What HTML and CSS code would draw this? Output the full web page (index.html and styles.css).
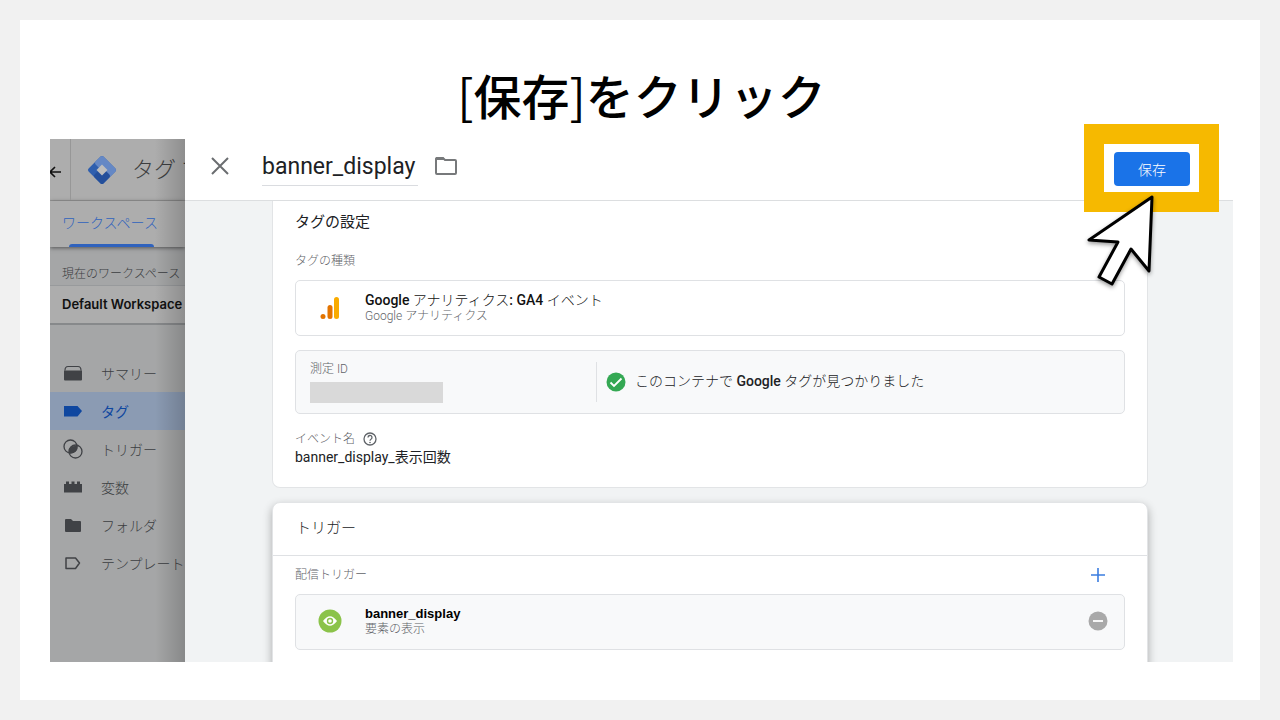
FILE: index.html
```
<!DOCTYPE html>
<html lang="ja">
<head>
    <meta charset="UTF-8">
    <meta name="viewport" content="width=device-width, initial-scale=1.0">
    <title>[保存]をクリック</title>
    <link rel="stylesheet" href="styles.css">
</head>
<body>

<main class="slide">
    <h1><span class="bracket">[</span>保存<span class="bracket">]</span>をクリック</h1>

    <div class="app">
        <aside class="sidebar">
            <div class="brand">
                <button class="back" aria-label="戻る">
                    <svg width="14" height="14" viewBox="0 0 14 14"><path d="M13 7H2M7 2L2 7l5 5" fill="none" stroke="#111" stroke-width="1.6"/></svg>
                </button>
                <svg class="logo" width="30" height="30" viewBox="0 0 30 30">
                    <path d="M15 3L27 15 15 27 3 15z" fill="#2f5fae" stroke="#2f5fae" stroke-width="4" stroke-linejoin="round"/>
                    <path d="M15 3L27 15l-5 5-12-12z" fill="#6588c5" stroke="#6588c5" stroke-width="4" stroke-linejoin="round"/>
                    <path d="M9 21l6-6 6 6-6 6z" fill="#244f9b" stroke="#244f9b" stroke-width="4" stroke-linejoin="round"/>
                    <path d="M15 9.500l5.500 5.500-5.500 5.500L9.500 15z" fill="#bdbdbd"/>
                </svg>
                <span class="product">タグ マネージャー</span>
            </div>
            <div class="tabs"><a href="#">ワークスペース</a></div>
            <p class="workspace-label">現在のワークスペース</p>
            <div class="workspace">Default Workspace</div>
            <nav class="menu">
                <a href="#">
                    <svg width="20" height="20" viewBox="0 0 20 20"><path d="M1 7.500h18v9q0 1-1 1H2q-1 0-1-1z" fill="#404246"/><path d="M2 7.500q0-4 3-4h10q3 0 3 4" fill="none" stroke="#404246" stroke-width="1.200"/></svg>
                    サマリー
                </a>
                <a href="#" class="active">
                    <svg width="20" height="20" viewBox="0 0 20 20"><path d="M1 5h13.500l4.500 5-4.500 5.500H1z" fill="#0f47a0"/></svg>
                    タグ
                </a>
                <a href="#">
                    <svg width="20" height="20" viewBox="0 0 20 20"><g fill="none" stroke="#404246" stroke-width="1.3"><circle cx="7.500" cy="7.500" r="6.500"/><circle cx="12.500" cy="12.500" r="6.500"/></g><path d="M14 7q1 7-7.500 7Q5 6 14 7z" fill="#404246" stroke="#404246"/></svg>
                    トリガー
                </a>
                <a href="#">
                    <svg width="20" height="20" viewBox="0 0 20 20"><path d="M1 7h2V4.500h3V7h2.500V4.500h3V7H14V4.500h3V7h2v8.500H1z" fill="#404246"/></svg>
                    変数
                </a>
                <a href="#">
                    <svg width="20" height="20" viewBox="0 0 20 20"><path d="M2 5q0-1 1-1h5l2 2h7q1 0 1 1v9q0 1-1 1H3q-1 0-1-1z" fill="#404246"/></svg>
                    フォルダ
                </a>
                <a href="#">
                    <svg width="20" height="20" viewBox="0 0 20 20"><path d="M3 5h9.500l4 5-4 5.500H3z" fill="none" stroke="#404246" stroke-width="1.500" stroke-linejoin="round"/></svg>
                    テンプレート
                </a>
            </nav>
        </aside>

        <section class="drawer">
            <header class="drawer-header">
                <button class="close" aria-label="閉じる">
                    <svg width="18" height="18" viewBox="0 0 18 18"><path d="M1 1l16 16M17 1L1 17" stroke="#6a6d70" stroke-width="2"/></svg>
                </button>
                <input class="tag-name" type="text" value="banner_display" aria-label="タグ名">
                <button class="folder" aria-label="フォルダ">
                    <svg width="24" height="20" viewBox="0 0 24 20"><path d="M2 2.500q0-.5 1-.5h6l2 2h10q1 0 1 1v12q0 1-1 1H3q-1 0-1-1z" fill="none" stroke="#77797b" stroke-width="2"/><path d="M2 1h7l2 3H2z" fill="#77797b"/></svg>
                </button>
                <div class="callout">
                    <button class="save">保存</button>
                    <svg class="pointer" width="76" height="96" viewBox="0 0 76 96"><path d="M68 3L5 46l29 2L15 83l13 7 19-35 18 22z" fill="#fff" stroke="#000" stroke-width="3" stroke-linejoin="round"/></svg>
                </div>
            </header>

            <div class="drawer-body">
                <section class="card tag-card">
                    <h2>タグの設定</h2>
                    <h3>タグの種類</h3>
                    <div class="box row">
                        <svg class="row-icon" width="24" height="24" viewBox="0 0 24 24"><rect x="16" y="2" width="5" height="22" rx="2.500" fill="#f9ab00"/><rect x="9.500" y="10" width="5" height="14" rx="2.500" fill="#e37400"/><circle cx="5" cy="21.500" r="2.500" fill="#e37400"/></svg>
                        <div>
                            <p class="row-title"><b>Google</b> アナリティクス<b>: GA4</b> イベント</p>
                            <p class="row-sub">Google アナリティクス</p>
                        </div>
                    </div>
                    <div class="box measurement">
                        <div class="measure-id">
                            <h3>測定 ID</h3>
                            <div class="redacted"></div>
                        </div>
                        <p class="found">
                            <svg width="20" height="20" viewBox="0 0 20 20"><circle cx="10" cy="10" r="9.500" fill="#34a853"/><path d="M4.500 10.500l3.500 3.500 7.500-7.500" fill="none" stroke="#fff" stroke-width="1.800"/></svg>
                            <span>このコンテナで <b>Google</b> タグが見つかりました</span>
                        </p>
                    </div>
                    <h3 class="event-label">イベント名
                        <svg width="14" height="14" viewBox="0 0 14 14"><circle cx="7" cy="7" r="6" fill="none" stroke="#5f6368" stroke-width="1.300"/><path d="M5 5.500a2 2 0 1 1 3 1.700q-1 .6-1 1.600" fill="none" stroke="#5f6368" stroke-width="1.300"/><circle cx="7" cy="10.500" r=".8" fill="#5f6368"/></svg>
                    </h3>
                    <p class="event-name">banner_display_表示回数</p>
                </section>

                <section class="card trigger-card">
                    <h2>トリガー</h2>
                    <div class="trigger-head">
                        <h3>配信トリガー</h3>
                        <button class="add" aria-label="追加">
                            <svg width="16" height="16" viewBox="0 0 16 16"><path d="M8 1v14M1 8h14" stroke="#3b7de0" stroke-width="1.600"/></svg>
                        </button>
                    </div>
                    <div class="box row shaded">
                        <svg class="row-icon" width="24" height="24" viewBox="0 0 24 24"><circle cx="12" cy="12" r="11.500" fill="#8bc34a"/><path d="M5 12q7-9.500 14 0-7 9.500-14 0z" fill="#fff"/><circle cx="12" cy="12" r="3.200" fill="#8bc34a"/><circle cx="12" cy="12" r="1.800" fill="#fff"/></svg>
                        <div>
                            <p class="trigger-name">banner_display</p>
                            <p class="row-sub">要素の表示</p>
                        </div>
                        <button class="remove" aria-label="削除">
                            <svg width="20" height="20" viewBox="0 0 20 20"><circle cx="10" cy="10" r="9.500" fill="#a9a9a9"/><path d="M5 10h10" stroke="#fff" stroke-width="1.800"/></svg>
                        </button>
                    </div>
                </section>
            </div>
        </section>
    </div>
</main>

</body>
</html>
```
FILE: styles.css
```
* {
    box-sizing: border-box;
}
body {
    margin: 0;
    padding: 20px;
    background-color: #f1f1f1;
    color: #202124;
    font-family: Roboto, "Noto Sans CJK JP", sans-serif;
    font-size: 14px;
    font-weight: 300;
}
h1, h2, h3, p {
    margin: 0;
}
a {
    color: inherit;
    text-decoration: none;
}
button {
    display: flex;
    align-items: center;
    justify-content: center;
    padding: 0;
    border: none;
    background: none;
    font: inherit;
    cursor: pointer;
}
svg {
    display: block;
    flex: none;
}
b {
    font-weight: 500;
}
.slide {
    display: flex;
    flex-direction: column;
    height: calc(100vh - 40px);
    padding: 36px 27px 38px 30px;
    background-color: #fff;
}
h1 {
    padding-bottom: 7px;
    color: #000;
    font-family: "Noto Sans CJK JP", sans-serif;
    font-size: 48px;
    font-weight: 500;
    line-height: 76px;
    text-align: center;
}
.bracket {
    font-weight: 400;
}
.app {
    display: flex;
    flex: 1;
    min-height: 0;
}

/* dimmed page behind the drawer */
.sidebar {
    position: relative;
    flex: none;
    width: 135px;
    overflow: hidden;
    background-color: #a5a6a7;
    color: #3c3e42;
    white-space: nowrap;
}
.sidebar::after {
    content: "";
    position: absolute;
    top: 0;
    right: 0;
    bottom: 0;
    width: 30px;
    background: linear-gradient(to right, rgba(0, 0, 0, 0), rgba(0, 0, 0, 0.18));
}
.brand {
    display: flex;
    align-items: center;
    height: 62px;
    border-bottom: 1px solid #979797;
    background-color: #adadad;
}
.back {
    flex: none;
    align-self: stretch;
    justify-content: flex-start;
    width: 21px;
    border-right: 1px solid #979797;
    padding-top: 4px;
}
.back svg {
    margin-left: -2px;
}
.logo {
    margin: 0 15px 0 16px;
}
.product {
    color: #3c3e40;
    font-size: 22px;
    line-height: 61px;
}
.tabs {
    display: flex;
    height: 46px;
    padding: 0 12px;
    background-color: #adadad;
    box-shadow: 0 1px 4px rgba(0, 0, 0, 0.5);
    color: #2f62bd;
    line-height: 44px;
}
.tabs a {
    position: relative;
}
.tabs a::after {
    content: "";
    position: absolute;
    right: 4px;
    bottom: 0;
    left: 7px;
    height: 3px;
    border-radius: 3px 3px 0 0;
    background-color: #2f62bd;
}
.workspace-label {
    padding: 18px 12px 2px;
    font-size: 12px;
    line-height: 18px;
}
.workspace {
    height: 40px;
    padding: 0 12px;
    border-top: 1px solid #989a9c;
    border-bottom: 2px solid #87898b;
    background-color: #adadad;
    color: #111;
    font-family: Inter, sans-serif;
    font-size: 13px;
    font-weight: 600;
    line-height: 36px;
}
.menu {
    padding-top: 29px;
}
.menu a {
    display: flex;
    align-items: center;
    gap: 18px;
    height: 38px;
    padding-left: 13px;
}
.menu .active {
    background-color: #8b9bb3;
    color: #0f47a0;
    font-weight: 400;
}

/* drawer */
.drawer {
    display: flex;
    flex: 1;
    flex-direction: column;
    min-width: 0;
}
.drawer-header {
    display: flex;
    flex: none;
    align-items: center;
    height: 62px;
    padding: 0 43px 8px 26px;
    border-bottom: 1px solid #dcdee0;
}
.tag-name {
    width: 156px;
    height: 40px;
    margin: 0 16px 0 33px;
    padding: 2px 0 0;
    border: none;
    border-bottom: 1px solid #dadce0;
    color: #202124;
    font-family: Roboto, sans-serif;
    font-size: 23px;
}
.callout {
    position: relative;
    margin-left: auto;
    padding-top: 6px;
}
.callout::before {
    content: "";
    position: absolute;
    inset: -22px -29px -26px -30px;
    border: 20px solid #f6b900;
    background-color: #fff;
}
.save {
    position: relative;
    width: 76px;
    height: 34px;
    border-radius: 4px;
    background-color: #1a73e8;
    color: #fff;
}
.pointer {
    position: absolute;
    z-index: 1;
    top: 48px;
    left: -30px;
    filter: drop-shadow(0 2px 2px rgba(0, 0, 0, 0.4));
}
.drawer-body {
    flex: 1;
    min-height: 0;
    padding: 0 85px 0 87px;
    overflow: hidden;
    background-color: #f1f3f4;
}
.card {
    padding: 0 22px;
    border: 1px solid #e2e4e6;
    border-radius: 8px;
    background-color: #fff;
}
.tag-card {
    padding-bottom: 21px;
    border-top: none;
    border-radius: 0 0 8px 8px;
}
.trigger-card {
    margin-top: 14px;
    padding-bottom: 40px;
    box-shadow: 0 4px 10px rgba(0, 0, 0, 0.3);
}
h2 {
    font-size: 15px;
    font-weight: 400;
    line-height: 42px;
}
h3 {
    color: #5f6368;
    font-size: 12px;
    font-weight: 300;
    line-height: 18px;
}
.tag-card > h3 {
    margin-top: 9px;
}
.box {
    display: flex;
    align-items: center;
    border: 1px solid #dfe1e4;
    border-radius: 5px;
}
.row {
    height: 56px;
    margin-top: 10px;
    padding: 0 16px 2px 22px;
}
.shaded, .measurement {
    background-color: #f8f9fa;
}
.row-icon {
    margin-right: 23px;
}
.row-title {
    color: #111;
    line-height: 18px;
}
.row-sub {
    color: #5f6368;
    font-size: 12px;
    line-height: 14px;
}
.measurement {
    height: 64px;
    margin-top: 14px;
}
.measure-id {
    width: 301px;
    height: 40px;
    padding-left: 14px;
    border-right: 1px solid #dfe1e4;
}
.measure-id h3 {
    line-height: 14px;
}
.redacted {
    width: 133px;
    height: 21px;
    margin-top: 6px;
    background-color: #d9d9d9;
}
.found {
    display: flex;
    align-items: center;
    gap: 9px;
    padding-left: 9px;
}
.found span {
    padding-bottom: 4px;
}
.event-label {
    display: flex;
    align-items: center;
    gap: 8px;
}
.tag-card > .event-label {
    margin-top: 16px;
}
.event-name {
    font-weight: 400;
    line-height: 18px;
}
.trigger-card h2 {
    margin: 0 -22px;
    padding: 4px 23px 6px;
    border-bottom: 1px solid #dfe1e4;
    font-weight: 300;
}
.trigger-head {
    display: flex;
    align-items: center;
    justify-content: space-between;
    padding: 10px 19px 0 0;
}
.trigger-name {
    color: #000;
    font-family: "Liberation Sans", sans-serif;
    font-size: 13px;
    font-weight: 700;
    line-height: 16px;
}
.remove {
    margin-left: auto;
}
```
